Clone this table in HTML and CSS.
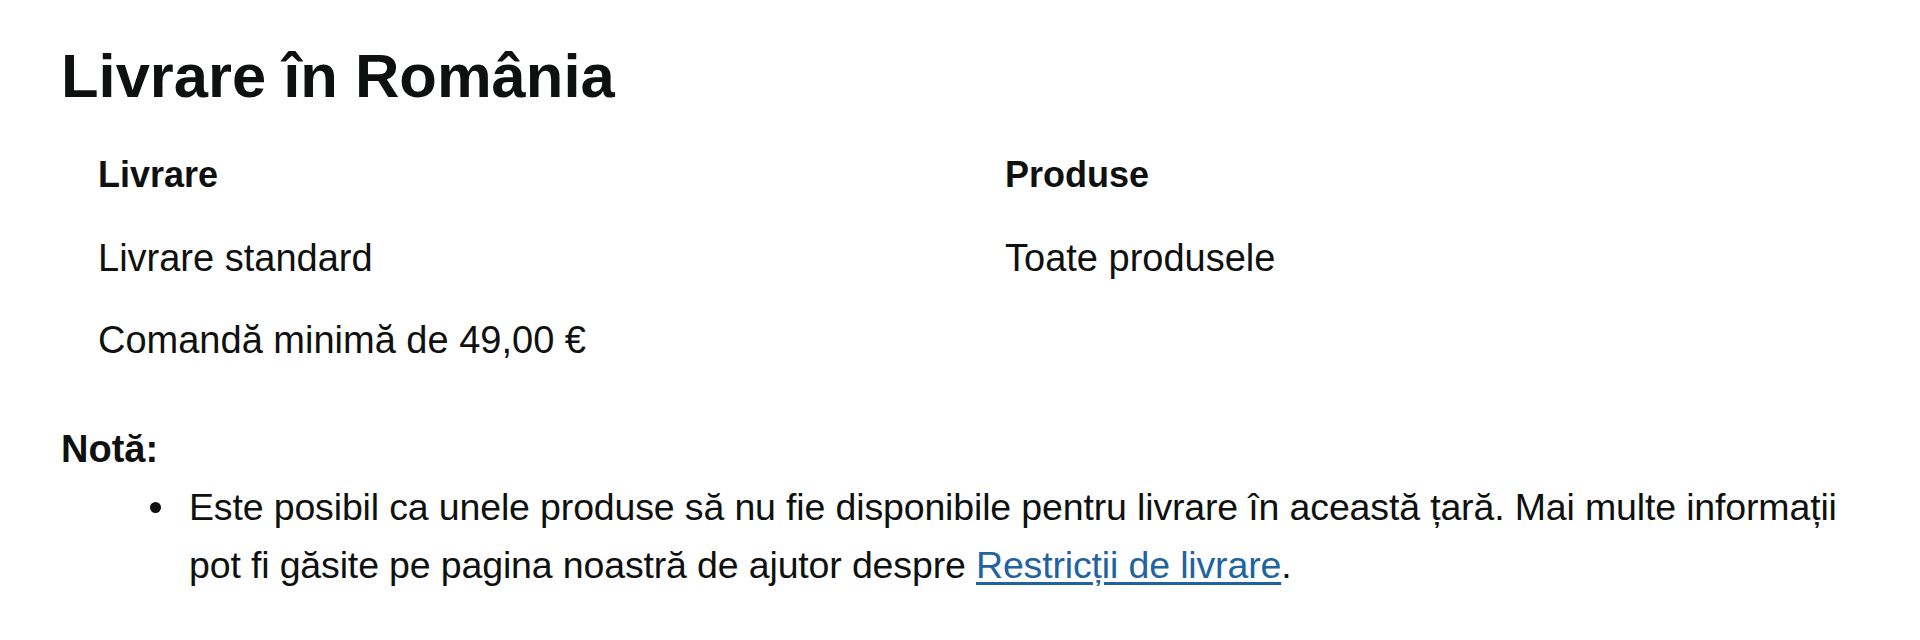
FILE: index.html
```html
<!DOCTYPE html>
<html lang="ro">
<head>
  <meta charset="UTF-8">
  <meta name="viewport" content="width=device-width, initial-scale=1.0">
  <title>Livrare în România</title>
  <link rel="stylesheet" href="styles.css">
</head>
<body>
  <div class="page">
    <h1>Livrare în România</h1>

    <!-- Metode de livrare -->
    <div class="ship-table">
      <div class="cell head">Livrare</div>
      <div class="cell head">Produse</div>
      <div class="cell">Livrare standard</div>
      <div class="cell">Toate produsele</div>
      <div class="cell">Comandă minimă de 49,00 €</div>
      <div class="cell"></div>
    </div>

    <p class="note-title">Notă:</p>
    <ul class="notes">
      <li>Este posibil ca unele produse să nu fie disponibile pentru livrare în această țară. Mai multe informații pot fi găsite pe pagina noastră de ajutor despre <a href="#">Restricții de livrare</a>.</li>
    </ul>
  </div>
</body>
</html>
```

FILE: styles.css
```css
body { margin: 0; background: #fff; color: #0f1111; font-family: 'Liberation Sans', Arial, sans-serif; }
.page { padding: 39px 30px 0 61px; }
h1 { font-size: 61.5px; line-height: 73px; font-weight: 700; margin: 0 0 22px 0; }
.ship-table { display: grid; grid-template-columns: 907px 1fr; padding-left: 37px; }
.cell { font-size: 38px; line-height: 82.5px; min-height: 82.5px; }
.cell.head { font-size: 36px; font-weight: 700; }
.note-title { font-size: 38px; line-height: 57px; font-weight: 700; margin: 39px 0 0 0; }
.notes { font-size: 37.5px; letter-spacing: -0.15px; line-height: 58.5px; margin: 0; padding-left: 128px; list-style: none; }
.notes li { position: relative; }
.notes li::before { content: ''; position: absolute; left: -39px; top: 24px; width: 11px; height: 11px; border-radius: 50%; background: #0f1111; }
.notes a { color: #2162a1; text-decoration: underline; text-underline-offset: 4px; }
```
